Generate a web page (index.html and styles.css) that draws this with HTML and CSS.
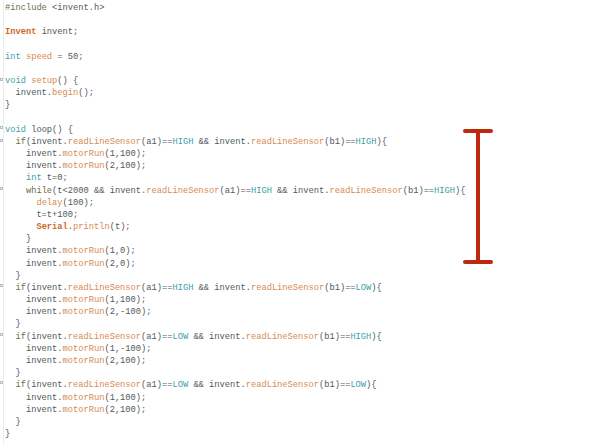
FILE: index.html
```html
<!DOCTYPE html>
<html>
<head>
<meta charset="utf-8">
<link rel="stylesheet" href="styles.css">
</head>
<body>
<div class="editor">
<div class="gutter"><span class="fold f1"></span><span class="fold f2"></span><span class="fold f3"></span><span class="fold f4"></span><span class="fold f5"></span><span class="fold f6"></span><span class="fold f7"></span></div>
<pre class="code"><span class="pp">#include</span> &lt;invent.h&gt;

<span class="cls">Invent</span> invent;

<span class="kw">int</span> <span class="fn">speed</span> = 50;

<span class="kw">void</span> <span class="fn">setup</span>() {
  invent.<span class="fn">begin</span>();
}

<span class="kw">void</span> loop() {
  <span class="pp">if</span>(invent.<span class="fn">readLineSensor</span>(a1)==<span class="kw">HIGH</span> &amp;&amp; invent.<span class="fn">readLineSensor</span>(b1)==<span class="kw">HIGH</span>){
    invent.<span class="fn">motorRun</span>(1,100);
    invent.<span class="fn">motorRun</span>(2,100);
    <span class="kw">int</span> t=0;
    <span class="pp">while</span>(t&lt;2000 &amp;&amp; invent.<span class="fn">readLineSensor</span>(a1)==<span class="kw">HIGH</span> &amp;&amp; invent.<span class="fn">readLineSensor</span>(b1)==<span class="kw">HIGH</span>){
      <span class="fn">delay</span>(100);
      t=t+100;
      <span class="cls">Serial</span>.<span class="fn">println</span>(t);
    }
    invent.<span class="fn">motorRun</span>(1,0);
    invent.<span class="fn">motorRun</span>(2,0);
  }
  <span class="pp">if</span>(invent.<span class="fn">readLineSensor</span>(a1)==<span class="kw">HIGH</span> &amp;&amp; invent.<span class="fn">readLineSensor</span>(b1)==<span class="kw">LOW</span>){
    invent.<span class="fn">motorRun</span>(1,100);
    invent.<span class="fn">motorRun</span>(2,-100);
  }
  <span class="pp">if</span>(invent.<span class="fn">readLineSensor</span>(a1)==<span class="kw">LOW</span> &amp;&amp; invent.<span class="fn">readLineSensor</span>(b1)==<span class="kw">HIGH</span>){
    invent.<span class="fn">motorRun</span>(1,-100);
    invent.<span class="fn">motorRun</span>(2,100);
  }
  <span class="pp">if</span>(invent.<span class="fn">readLineSensor</span>(a1)==<span class="kw">LOW</span> &amp;&amp; invent.<span class="fn">readLineSensor</span>(b1)==<span class="kw">LOW</span>){
    invent.<span class="fn">motorRun</span>(1,100);
    invent.<span class="fn">motorRun</span>(2,100);
  }
}</pre>
<div class="marker"><span class="bar"></span><span class="stem"></span><span class="bar"></span></div>
</div>
</body>
</html>
```
FILE: styles.css
```css
html, body {
  margin: 0;
  padding: 0;
  background: #ffffff;
}
.editor {
  position: relative;
  width: 592px;
  height: 444px;
  overflow: hidden;
  background: #ffffff;
}
.gutter {
  position: absolute;
  left: 0;
  top: 0;
  width: 3px;
  height: 444px;
  border-right: 1px solid #ececec;
}
.fold {
  position: absolute;
  left: 0;
  width: 3px;
  height: 3px;
  border: 1px solid #b9bfc1;
  box-sizing: border-box;
}
.f1 { top: 78px; }
.f2 { top: 126px; }
.f3 { top: 139px; }
.f4 { top: 187px; }
.f5 { top: 284px; }
.f6 { top: 333px; }
.f7 { top: 381px; }
.code {
  margin: 0;
  padding: 2px 0 0 5px;
  font-family: "Liberation Mono", monospace;
  font-size: 8.72px;
  line-height: 12.17px;
  color: #4f5a5e;
  white-space: pre;
}
.kw { color: #3aa1a8; }
.fn { color: #d88a52; }
.cls { color: #cc6a2a; font-weight: bold; }
.pp { color: #6c7048; }
.marker {
  position: absolute;
  left: 463px;
  top: 129px;
  width: 30px;
  height: 135px;
  display: flex;
  flex-direction: column;
  align-items: center;
}
.bar {
  width: 30px;
  height: 4px;
  background: #c0280e;
  border-radius: 2px;
  flex: none;
}
.stem {
  width: 4px;
  flex: 1;
  background: #c0280e;
}
```
